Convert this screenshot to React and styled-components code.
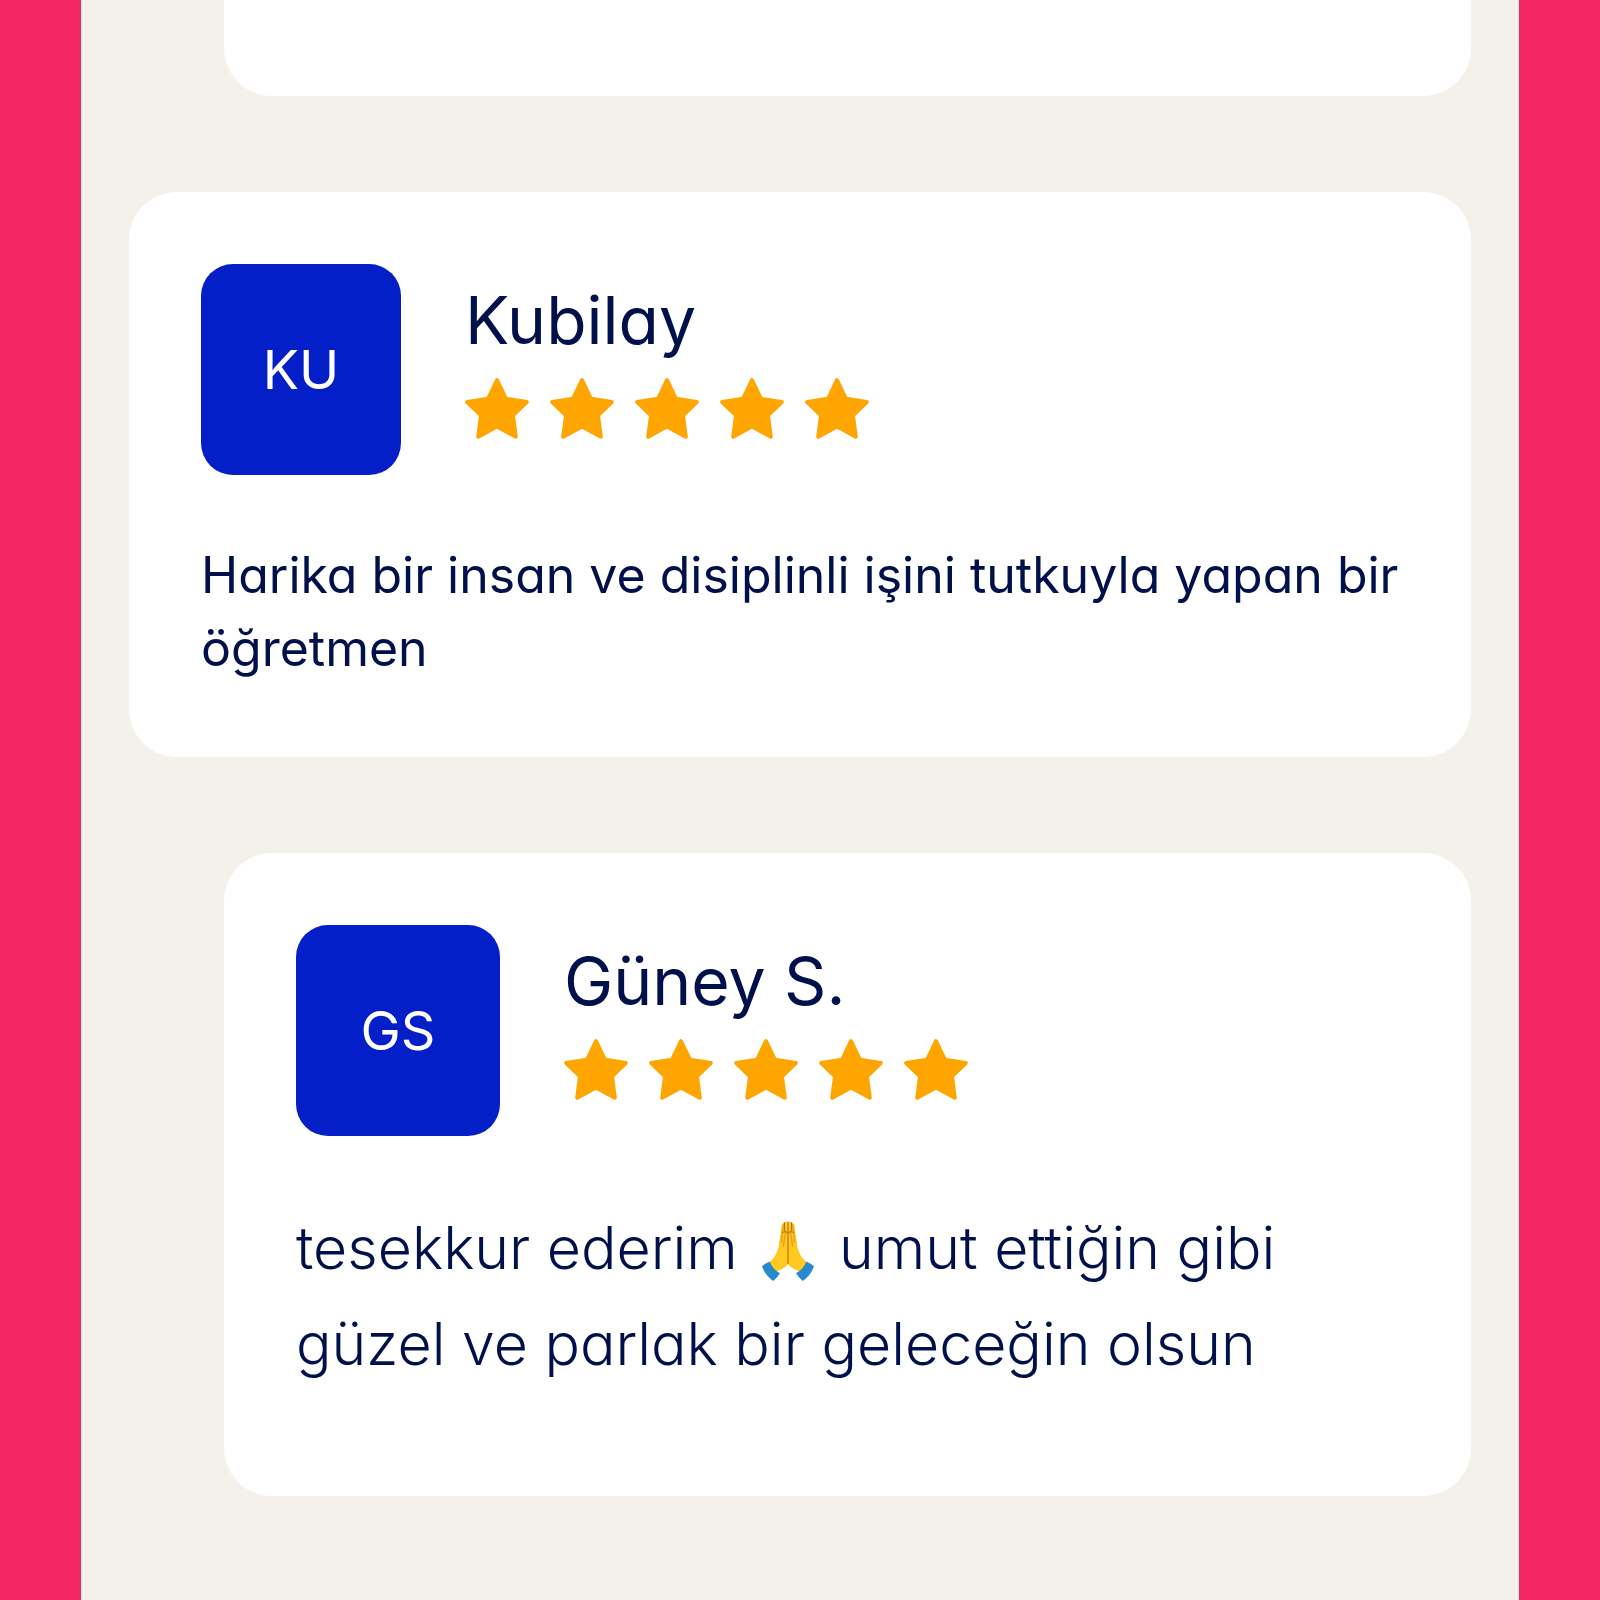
import React from 'react'
import styled, { createGlobalStyle } from 'styled-components'

const reviews = [
  {
    id: 1,
    initials: 'KU',
    name: 'Kubilay',
    stars: 5,
    text: 'Harika bir insan ve disiplinli işini tutkuyla yapan bir öğretmen',
  },
  {
    id: 2,
    initials: 'GS',
    name: 'Güney S.',
    stars: 5,
    reply: true,
    text: <>tesekkur ederim <PrayingHands /> umut ettiğin gibi güzel ve parlak bir geleceğin olsun</>,
  },
]

function Star() {
  return (
    <StarIcon viewBox='0 0 64 61' aria-hidden='true'>
      <path d='M32 2.2 L41 20.8 L61.8 24 L48 37.4 L50.8 58.8 L32 48.6 L13.2 58.8 L16 37.4 L2.2 24 L23 20.8 Z' />
    </StarIcon>
  )
}

function PrayingHands() {
  return (
    <HandsIcon viewBox='0 0 160 180' role='img' aria-label='🙏'>
      <path fill='#ffc91f' d='M68 5 Q72 0 80 3 Q88 0 92 5 Q98 6 99 14 L107 68 Q110 92 123 111 L140 127 L116 152 L98 144 Q86 138 80 128 Q74 138 62 144 L44 152 L20 127 L37 111 Q50 92 53 68 L61 14 Q62 6 68 5 Z' />
      <path fill='none' stroke='#e79c16' strokeWidth='4' d='M66 10 L60 66 M94 10 L100 66 M73 30 L66 76 M87 30 L94 76' />
      <path fill='none' stroke='#b9631a' strokeWidth='3' strokeLinecap='round' d='M80 3 V128 M69 5 L70 28 M91 5 L90 28 M64 34 Q74 28 78 36 M96 34 Q86 28 82 36' />
      <path fill='#278acb' d='M2 136 Q12 126 25 122 Q36 146 56 157 Q48 170 36 180 Q12 164 2 136 Z M158 136 Q148 126 135 122 Q124 146 104 157 Q112 170 124 180 Q148 164 158 136 Z' />
    </HandsIcon>
  )
}

function Review({ review }) {
  return (
    <Card $reply={review.reply}>
      <CardHeader>
        <Avatar $reply={review.reply}>{review.initials}</Avatar>
        <Author>
          <Name>{review.name}</Name>
          <Stars role='img' aria-label={`${review.stars} / 5`}>
            {Array.from({ length: review.stars }, (_, i) => <Star key={i} />)}
          </Stars>
        </Author>
      </CardHeader>
      <Comment $reply={review.reply}>{review.text}</Comment>
    </Card>
  )
}

function App() {
  return (
    <Page>
      <GlobalStyle />
      <List>
        <CardEnd />
        {reviews.map(review => <Review key={review.id} review={review} />)}
      </List>
    </Page>
  )
}

export default App


const GlobalStyle = createGlobalStyle`
* {
  box-sizing: border-box;
}

body {
  margin: 0;
  background: #f32761;
  color: #00104b;
  font-family: Inter, 'Open Sans', sans-serif;
  font-feature-settings: 'cv11';
  font-optical-sizing: none;
}
`

const Page = styled.div`
  min-height: 100vh;
  display: flex;
  padding: 0 81px;
`

const List = styled.main`
  flex: 1;
  display: flex;
  flex-direction: column;
  gap: 96px;
  padding: 0 48px 96px;
  background: #f4f1ea;
`

const Card = styled.article`
  margin-left: ${props => props.$reply ? '95px' : '0'};
  padding: 72px 72px ${props => props.$reply ? '104px' : '72px'};
  border-radius: 48px;
  background: white;
`

/* tail of the review above the fold */
const CardEnd = styled.div`
  height: 96px;
  margin-left: 95px;
  border-radius: 0 0 48px 48px;
  background: white;
`

const CardHeader = styled.header`
  display: flex;
  align-items: center;
  gap: 64px;
`

const Avatar = styled.div`
  display: flex;
  align-items: center;
  justify-content: center;
  width: ${props => props.$reply ? '204px' : '200px'};
  height: 211px;
  border-radius: 32px;
  background: #041fc7;
  color: white;
  font-size: 54px;
`

const Author = styled.div`
  padding-bottom: 28px;
`

const Name = styled.h2`
  margin: 0;
  font-size: 66px;
  font-weight: 400;
  line-height: 96px;
`

const Stars = styled.div`
  display: flex;
  gap: 21px;
  margin-top: 10px;
`

const StarIcon = styled.svg`
  width: 64px;
  height: 61px;
  fill: #ffa500;
  stroke: #ffa500;
  stroke-width: 4;
  stroke-linejoin: round;
`

const Comment = styled.p`
  margin: 64px 0 0;
  font-size: ${props => props.$reply ? '59px' : '50px'};
  font-weight: ${props => props.$reply ? 300 : 400};
  line-height: ${props => props.$reply ? '96px' : '73px'};
`

const HandsIcon = styled.svg`
  width: 54px;
  height: 60px;
  margin: 0 7px;
  vertical-align: -12px;
`
